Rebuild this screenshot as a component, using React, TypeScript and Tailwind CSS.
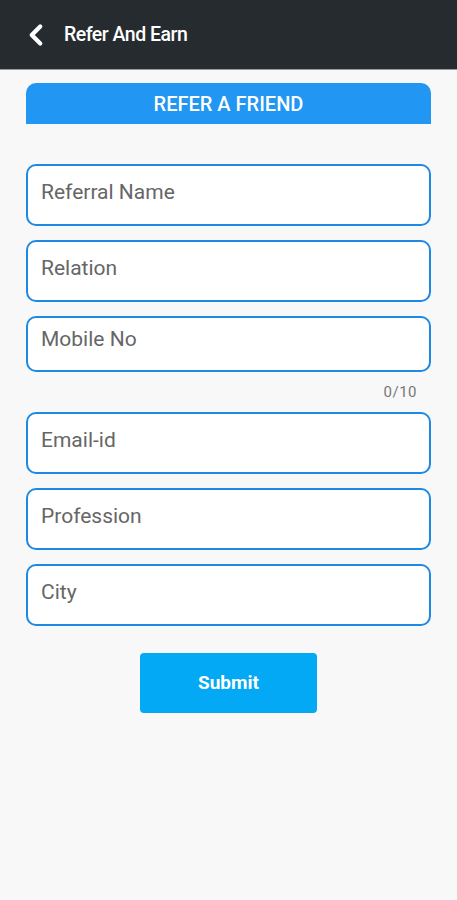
import { ChevronLeft } from 'lucide-react'

const fields = [
  { label: 'Referral Name', h: 'h-[62px]', pt: 'pt-[13px]' },
  { label: 'Relation', h: 'h-[62px]', pt: 'pt-[13px]' },
  { label: 'Mobile No', h: 'h-[56px]', pt: 'pt-[8px]', counter: '0/10' },
  { label: 'Email-id', h: 'h-[62px]', pt: 'pt-[13px]' },
  { label: 'Profession', h: 'h-[62px]', pt: 'pt-[13px]' },
  { label: 'City', h: 'h-[62px]', pt: 'pt-[13px]' },
]

export default function App() {
  return (
    <div className="w-[457px] h-[900px] bg-[#f8f8f8] font-['Roboto',sans-serif] flex flex-col">
      {/* header */}
      <div className="h-[70px] bg-[#262b30] border-b border-[#9a9a9a] flex items-center shrink-0">
        <ChevronLeft className="w-[34px] h-[34px] text-white ml-[19px]" strokeWidth={3} />
        <span className="ml-[11px] text-white text-[19.5px] font-medium tracking-[-0.5px]">Refer And Earn</span>
      </div>

      <div className="px-[26px] pt-[13px]">
        <div className="h-[41px] bg-[#2196f3] rounded-t-[10px] flex items-center justify-center">
          <span className="text-white text-[20px] font-medium">REFER A FRIEND</span>
        </div>

        <div className="mt-[40px] flex flex-col">
          {fields.map((f, i) => (
            <div key={f.label} className={i === 0 || f.label === 'Email-id' ? '' : 'mt-[14px]'}>
              <div className={`${f.h} ${f.pt} bg-white border-2 border-[#1e88e5] rounded-[10px] pl-[13px]`}>
                <span className="text-[21px] text-[#666666] leading-[26px]">{f.label}</span>
              </div>
              {f.counter && (
                <div className="h-[40px] flex items-center justify-end pr-[14px] text-[15px] text-[#777777] tracking-[0.5px]">
                  {f.counter}
                </div>
              )}
            </div>
          ))}
        </div>

        <div className="flex justify-center mt-[27px]">
          <button className="w-[177px] h-[60px] bg-[#03a9f4] rounded-[4px] text-white text-[19px] font-bold">
            Submit
          </button>
        </div>
      </div>
    </div>
  )
}
